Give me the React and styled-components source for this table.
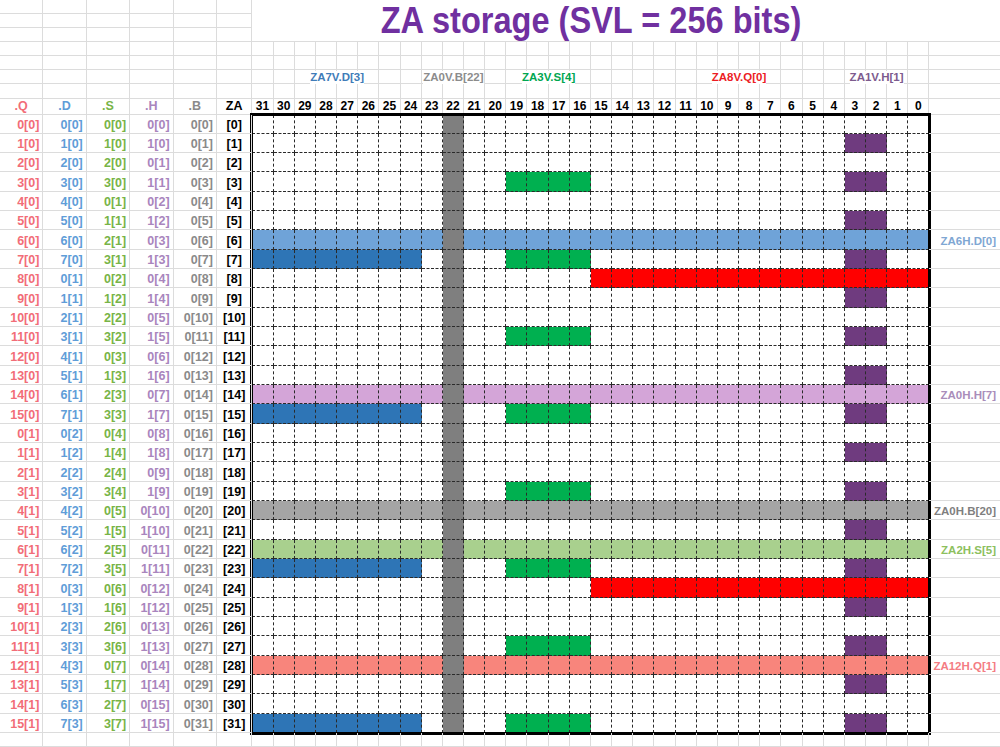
import React from 'react';
import styled, { createGlobalStyle } from 'styled-components';

const LINE = '#dcdcdc';
const DASH = '1px dashed #2a2a2a';
const FONT = '"Liberation Sans", Arial, sans-serif';

const GlobalStyle = createGlobalStyle`
  html, body { margin: 0; padding: 0; background: #fff; }
  body { font-family: ${FONT}; }
`;

const Sheet = styled.div`
  display: grid;
  width: 1000px;
  height: 747px;
  overflow: hidden;
  grid-template-columns: repeat(5, 43.4px) 35.5px repeat(32, 21.17px) 1fr;
  grid-template-rows: repeat(6, 14px) 15px 15.5px repeat(32, 19.33px) 1fr;
`;

const Blank = styled.div`
  box-sizing: border-box;
  border-right: ${p => (p.$edge ? 'none' : `1px solid ${LINE}`)};
  border-bottom: 1px solid ${LINE};
`;

const Title = styled.h1`
  grid-column: 7 / -1;
  grid-row: span 3;
  margin: 0;
  padding-right: 70px;
  box-sizing: border-box;
  border-bottom: 1px solid ${LINE};
  display: flex;
  align-items: center;
  justify-content: center;
`;

// Calibri-like proportions: a touch narrower than Arial
const TitleText = styled.span`
  display: inline-block;
  transform: scaleX(0.88);
  color: #7030a0;
  font: bold 37px/1 ${FONT};
  white-space: nowrap;
`;

const Band = styled.div`
  grid-column: 7 / 39;
  display: grid;
  grid-template-columns: repeat(32, 1fr);
`;

const BandCell = styled(Blank)`
  grid-row: 1;
  grid-column: ${p => p.$col};
`;

const BandLabel = styled.span`
  grid-row: 1;
  grid-column: ${p => p.$from} / ${p => p.$to};
  justify-self: center;
  align-self: start;
  height: 13px;
  margin-top: 1px;
  background: #fff;
  color: ${p => p.$color};
  font: bold 11.5px/13px ${FONT};
  white-space: nowrap;
  z-index: 1;
`;

const Cell = styled.div`
  box-sizing: border-box;
  display: flex;
  align-items: ${p => (p.$middle ? 'center' : 'flex-end')};
  justify-content: ${p => p.$align || 'flex-end'};
  padding: 0 3px 1px;
  border-right: 1px solid ${LINE};
  border-bottom: 1px solid ${LINE};
  color: ${p => p.$color || '#000'};
  font: bold 12.5px/14px ${FONT};
  white-space: nowrap;
`;

const ByteNum = styled(Cell)`
  justify-content: center;
  align-items: center;
  padding: 0;
  font-size: 12px;
`;

const SideLabel = styled(Cell)`
  border-right: none;
  padding-right: 4px;
  font-size: 11.5px;
`;

const Board = styled.div`
  grid-column: 7 / 39;
  grid-row: 9 / 41;
  display: grid;
  grid-template-columns: repeat(32, 1fr);
  grid-template-rows: repeat(32, 1fr);
  outline: 3px solid #000;
  outline-offset: -1.5px;
`;

const Bit = styled.div`
  box-sizing: border-box;
  min-width: 0;
  background: ${p => p.$fill || '#fff'};
  border-right: ${p => (p.$lastCol ? 'none' : DASH)};
  border-bottom: ${p => (p.$lastRow ? 'none' : DASH)};
`;

const BYTES = Array.from({ length: 32 }, (_, i) => 31 - i);
const ROWS = Array.from({ length: 32 }, (_, r) => r);

const VIEWS = [
  { name: '.Q', n: 16, color: '#f26d78' },
  { name: '.D', n: 8, color: '#5f9dd8' },
  { name: '.S', n: 4, color: '#78b447' },
  { name: '.H', n: 2, color: '#a985bd' },
  { name: '.B', n: 1, color: '#8a8a8a' },
];

const TOP = [
  { text: 'ZA7V.D[3]', from: 31, to: 24, color: '#3f7cb8' },
  { text: 'ZA0V.B[22]', from: 23, to: 21, color: '#8c8c8c' },
  { text: 'ZA3V.S[4]', from: 19, to: 16, color: '#00a651' },
  { text: 'ZA8V.Q[0]', from: 14, to: 3, color: '#ec1c24' },
  { text: 'ZA1V.H[1]', from: 4, to: 0, color: '#7d5b8e' },
];

const SIDE = {
  6: { text: 'ZA6H.D[0]', color: '#7fa7d3' },
  14: { text: 'ZA0H.H[7]', color: '#a98dba' },
  20: { text: 'ZA0H.B[20]', color: '#7f7f7f' },
  22: { text: 'ZA2H.S[5]', color: '#8dc05e' },
  28: { text: 'ZA12H.Q[1]', color: '#f47c83' },
};

const ROW_FILL = {
  6: '#6fa3d8',
  14: '#d4a5d8',
  20: '#a5a5a5',
  22: '#a9d08e',
  28: '#f8857c',
};

function fillFor(row, byte) {
  if (byte === 22) return '#7f7f7f';
  if (ROW_FILL[row]) return ROW_FILL[row];
  if (row % 8 === 7 && byte >= 24) return '#2e75b6';
  if (row % 4 === 3 && byte >= 16 && byte <= 19) return '#00b050';
  if (row % 16 === 8 && byte <= 15) return '#ff0000';
  if (row % 2 === 1 && (byte === 3 || byte === 2)) return '#6f3b7f';
  return null;
}

const blankRow = key =>
  Array.from({ length: 39 }, (_, c) => <Blank key={`${key}-${c}`} $edge={c === 38} />);

export default function App() {
  return (
    <>
      <GlobalStyle />
      <Sheet>
        {Array.from({ length: 3 }, (_, r) => [
          ...Array.from({ length: 6 }, (_, c) => <Blank key={`t${r}-${c}`} />),
          r === 0 ? (
            <Title key="title">
              <TitleText>ZA storage (SVL = 256 bits)</TitleText>
            </Title>
          ) : null,
        ])}

        {blankRow('h1')}
        {blankRow('h2')}

        {Array.from({ length: 6 }, (_, c) => <Blank key={`lb-${c}`} />)}
        <Band>
          {BYTES.map((b, i) => (
            <BandCell key={b} $col={i + 1} />
          ))}
          {TOP.map(l => (
            <BandLabel key={l.text} $from={32 - l.from} $to={33 - l.to} $color={l.color}>
              {l.text}
            </BandLabel>
          ))}
        </Band>
        <Blank $edge />

        {blankRow('h3')}

        {VIEWS.map(v => (
          <Cell key={v.name} $align="center" $middle $color={v.color}>
            {v.name}
          </Cell>
        ))}
        <Cell $align="center" $middle>ZA</Cell>
        {BYTES.map(b => (
          <ByteNum key={b}>{b}</ByteNum>
        ))}
        <Blank $edge />

        <Board>
          {ROWS.map(r =>
            BYTES.map((b, i) => (
              <Bit key={`${r}-${b}`} $fill={fillFor(r, b)} $lastCol={i === 31} $lastRow={r === 31} />
            ))
          )}
        </Board>

        {ROWS.map(r => [
          ...VIEWS.map(v => (
            <Cell key={`${r}${v.name}`} $color={v.color}>
              {`${r % v.n}[${Math.floor(r / v.n)}]`}
            </Cell>
          )),
          <Cell key={`${r}za`} $align="center">[{r}]</Cell>,
          <SideLabel key={`${r}side`} $color={SIDE[r]?.color}>
            {SIDE[r]?.text}
          </SideLabel>,
        ])}

        {blankRow('f')}
      </Sheet>
    </>
  );
}
